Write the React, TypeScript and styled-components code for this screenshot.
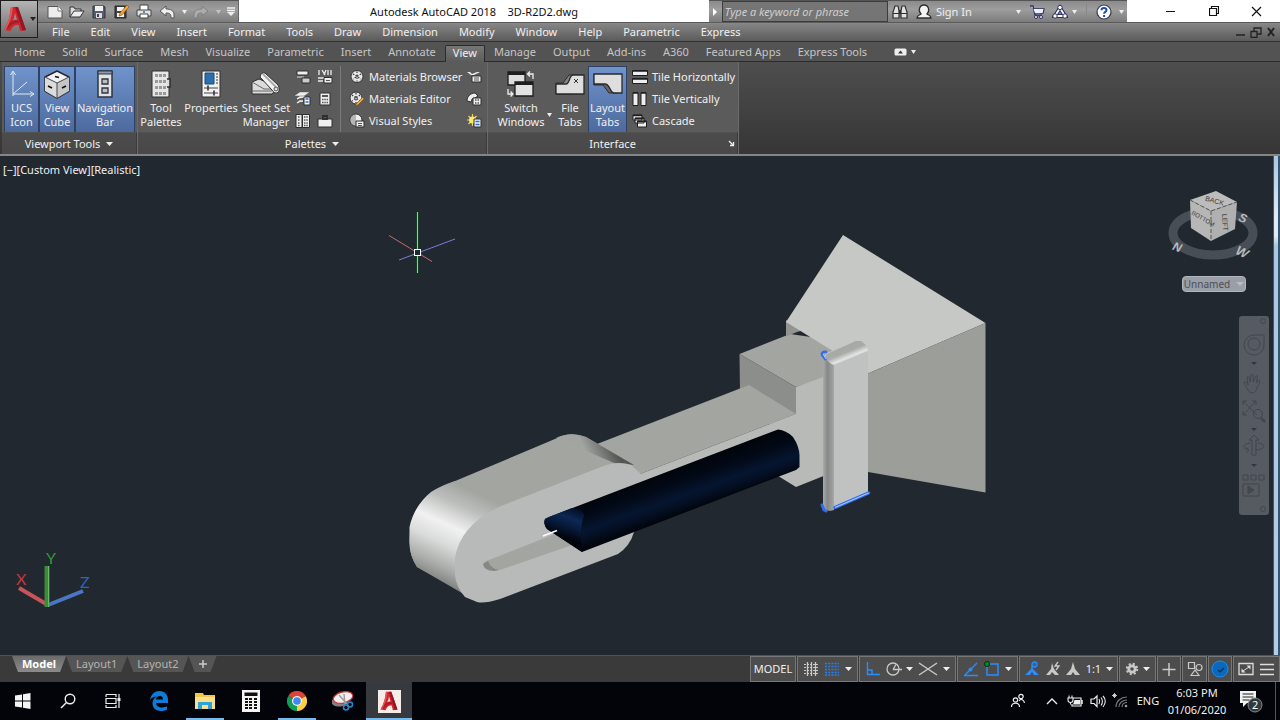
import React from "react";
import styled, { createGlobalStyle, css } from "styled-components";

const Global = createGlobalStyle`
  * { box-sizing: border-box; }
  body { margin: 0; background: #000; }
  button, input { font: inherit; color: inherit; }
  h1, h2, p { margin: 0; font: inherit; }
`;

const Shell = styled.div`
  min-height: 100vh;
  display: flex;
  flex-direction: column;
  font-family: "Noto Sans", "Open Sans", sans-serif;
  font-size: 11px;
  line-height: 14px;
  color: #f0f0f0;
  white-space: nowrap;
`;

const PlainButton = styled.button`
  display: flex;
  align-items: center;
  justify-content: center;
  padding: 0;
  border: 0;
  background: none;
  cursor: default;
`;

/* ---------- header ---------- */

const Header = styled.header`
  display: flex;
  background: linear-gradient(#8c8c8c 0, #8c8c8c 23px, #858585 24px, #5a5a5a 41px);
  border-bottom: 1px solid #303030;
`;

const AppButton = styled(PlainButton)`
  flex: none;
  width: 38px;
  height: 38px;
  gap: 2px;
  border: 1px solid #1d1d1d;
  background: linear-gradient(#b4b4b4, #6c6c6c);
`;

const HeaderRows = styled.div`
  flex: 1;
  min-width: 0;
`;

const TitleRow = styled.div`
  display: flex;
  height: 23px;
  background: #fff;
  border-bottom: 1px solid #5a5a5a;
`;

const barGradient = css`
  background: linear-gradient(#8b8b8b, #9d9d9d 40%, #7c7c7c);
`;

const QuickAccess = styled.div`
  flex: none;
  display: flex;
  width: 201px;
  padding-left: 6px;
  border-top: 1px solid #555;
  border-right: 1px solid #666;
  ${barGradient}
`;

const QuickButton = styled(PlainButton)<{ $w?: number }>`
  width: ${(p) => p.$w ?? 22}px;
`;

const Title = styled.h1`
  flex: 1;
  text-align: center;
  line-height: 23px;
  color: #111;
  white-space: pre;
`;

const InfoCenter = styled.div`
  flex: none;
  display: flex;
  align-items: center;
  width: 418px;
  border-top: 1px solid #555;
  ${barGradient}
`;

const SearchBox = styled.input`
  width: 168px;
  height: 21px;
  padding: 0 2px;
  border: 1px solid #3c3c3c;
  border-radius: 0;
  background: #757575;
  font-style: italic;
  outline: none;
  &::placeholder { color: #cfcfcf; opacity: 1; }
`;

const SignIn = styled(PlainButton)`
  width: 106px;
  margin-left: 4px;
  gap: 4px;
  justify-content: flex-start;
  & > :last-child { margin-left: auto; }
`;

const InfoDivider = styled.span`
  width: 1px;
  height: 16px;
  margin: 0 6px;
  background: #888;
`;

const WindowControls = styled.div`
  flex: none;
  display: flex;
  width: 153px;
  padding-left: 22px;
  color: #111;
`;

const WindowButton = styled(PlainButton)`
  width: 43px;
`;

const MenuRow = styled.div`
  display: flex;
  align-items: center;
  height: 18px;
`;

const Menu = styled.nav`
  flex: 1;
  display: flex;
  gap: 1px;
  padding-left: 4px;
`;

const MenuItem = styled(PlainButton)`
  padding: 0 10px;
`;

const DocControls = styled.div`
  display: flex;
  gap: 4px;
  padding-right: 4px;
  color: #222;
`;

/* ---------- ribbon ---------- */

const TabRow = styled.div`
  display: flex;
  height: 20px;
  gap: 1px;
  padding-left: 6px;
  background: #535353;
  border-bottom: 1px solid #2b2b2b;
`;

const RibbonTab = styled(PlainButton)<{ $active?: boolean }>`
  padding: 0 8px;
  color: #c6c6c6;
  ${(p) =>
    p.$active &&
    css`
      margin: 3px 0 -1px;
      padding: 0 7px 2px;
      border: 1px solid #2b2b2b;
      border-bottom: 0;
      border-radius: 2px 2px 0 0;
      background: linear-gradient(#777, #5b5b5b);
      color: #f0f0f0;
    `}
`;

const RibbonToggle = styled(PlainButton)`
  gap: 4px;
  margin-left: 18px;
`;

const Ribbon = styled.div`
  display: flex;
  height: 94px;
  padding-left: 2px;
  background: linear-gradient(#4e4e4e, #363636);
  border-bottom: 2px solid #858585;
`;

const Panel = styled.section<{ $w: number }>`
  flex: none;
  display: flex;
  flex-direction: column;
  width: ${(p) => p.$w}px;
  border-right: 1px solid #6b6b6b;
  background: #5b5b5b;
`;

const PanelBody = styled.div`
  display: flex;
  height: 70px;
  padding: 4px 2px 0;
`;

const PanelTitle = styled.div`
  flex: 1;
  display: grid;
  grid-template-columns: 12px 1fr 12px;
  align-items: center;
  border-top: 1px solid #525252;
  border-right: 1px solid #3a3a3a;
  background: linear-gradient(#4c4c4c, #484848);
`;

const PanelName = styled.h2`
  display: flex;
  align-items: center;
  justify-content: center;
  gap: 6px;
`;

const BigButton = styled(PlainButton)<{ $w: number; $on?: boolean }>`
  flex: none;
  flex-direction: column;
  justify-content: flex-start;
  width: ${(p) => p.$w}px;
  height: 67px;
  padding-top: 2px;
  ${(p) =>
    p.$on &&
    css`
      border: 1px solid #2f4266;
      padding-top: 1px;
      background: linear-gradient(#6f93cb, #4d6a9d);
    `}
`;

const BigIcon = styled.span`
  display: flex;
  align-items: center;
  height: 32px;
`;

const BigLabel = styled.span`
  display: flex;
  flex-direction: column;
  align-items: center;
  margin-top: 1px;
`;

const CaretSpot = styled.span`
  display: flex;
  align-self: flex-end;
  margin-top: -16px;
`;

const IconColumn = styled.div<{ $w: number }>`
  flex: none;
  width: ${(p) => p.$w}px;
  display: grid;
  grid-template-rows: repeat(3, 22px);
  justify-items: center;
`;

const ListColumn = styled.div<{ $w: number }>`
  flex: none;
  width: ${(p) => p.$w}px;
  display: grid;
  grid-template-rows: repeat(3, 22px);
`;

const ListButton = styled(PlainButton)`
  justify-content: flex-start;
  gap: 4px;
`;

const PanelRule = styled.span`
  flex: none;
  width: 1px;
  height: 66px;
  margin: 0 8px 0 4px;
  background: #7a7a7a;
`;

const WindowLayouts = styled.div`
  padding-left: 5px;
`;

/* ---------- drawing area ---------- */

const Workspace = styled.main`
  flex: 1;
  display: flex;
  min-height: 480px;
  background: #212830;
`;

const Canvas = styled.div`
  position: relative;
  flex: 1;
  overflow: hidden;
`;

const ModelDrawing = styled.svg`
  position: absolute;
  inset: 0;
  width: 100%;
  height: 100%;
`;

const ViewLabel = styled.p`
  position: absolute;
  top: 7px;
  left: 3px;
`;

const UcsIcon = styled.svg`
  position: absolute;
  left: 12px;
  bottom: 42px;
`;

const ViewCube = styled.div`
  position: absolute;
  top: 30px;
  right: 13px;
  display: flex;
  flex-direction: column;
  align-items: center;
  gap: 12px;
`;

const UcsMenu = styled(PlainButton)`
  width: 64px;
  height: 16px;
  gap: 6px;
  border: 1px solid #b3b6bd;
  border-radius: 4px;
  background: #9a9ea6;
  color: #4b4f57;
  font-size: 10px;
`;

const NavBar = styled.div`
  position: absolute;
  top: 160px;
  right: 4px;
  width: 30px;
  height: 199px;
  border-radius: 3px;
  background: #565b61;
`;

const ScrollEdge = styled.div`
  width: 7px;
  border-left: 1px solid #4b5563;
  border-right: 2px solid #35546e;
  background: linear-gradient(#a9c6e4 0, #dfeaf5 60px, #dfeaf5 80px, #a9c6e4 90px, #b5cde8);
`;

/* ---------- status bar ---------- */

const StatusBar = styled.footer`
  display: flex;
  align-items: flex-start;
  justify-content: space-between;
  height: 27px;
  border-top: 1px solid #50545a;
  background: #3a3a3a;
`;

const LayoutTabs = styled.div`
  display: flex;
  padding-left: 12px;
`;

const LayoutTab = styled(PlainButton)<{ $active?: boolean }>`
  height: 16px;
  padding: 0 10px;
  clip-path: polygon(0 0, 100% 0, calc(100% - 6px) 100%, 6px 100%);
  background: ${(p) => (p.$active ? "linear-gradient(#6a6a6a, #8b8b8b)" : "#555")};
  color: ${(p) => (p.$active ? "#fff" : "#b4b4b4")};
  font-weight: ${(p) => (p.$active ? 700 : 400)};
`;

const StatusTools = styled.div`
  display: flex;
  height: 26px;
  gap: 1px;
`;

const StatusGroup = styled.div<{ $w: number }>`
  display: flex;
  align-items: center;
  justify-content: space-evenly;
  width: ${(p) => p.$w}px;
  border: 1px solid #777;
  background: #4d4d4d;
`;

/* ---------- taskbar ---------- */

const TaskBar = styled.div`
  display: flex;
  justify-content: space-between;
  height: 38px;
  background: #020409;
`;

const TaskApps = styled.div`
  display: flex;
`;

const TaskButton = styled(PlainButton)<{ $running?: boolean; $focused?: boolean }>`
  width: 46px;
  background: ${(p) => (p.$focused ? "#36393d" : "none")};
  box-shadow: ${(p) =>
    p.$focused
      ? "inset 0 -2px #76b9ed"
      : p.$running
        ? "inset 4px 0 #020409, inset -4px 0 #020409, inset 0 -2px #76b9ed"
        : "none"};
`;

const SystemButton = styled(TaskButton)`
  width: 45px;
`;

const Tray = styled.div`
  display: flex;
  align-items: center;
`;

const TrayButton = styled(PlainButton)<{ $w: number }>`
  width: ${(p) => p.$w}px;
  height: 38px;
`;

const Clock = styled.div`
  width: 64px;
  text-align: center;
  line-height: 17px;
`;

const ShowDesktop = styled.span`
  width: 5px;
  height: 38px;
  border-left: 1px solid #555;
`;

const TaskTile = styled.span`
  display: flex;
  align-items: center;
  justify-content: center;
  width: 23px;
  height: 23px;
  background: #f6ece8;
`;

/* ---------- icons ---------- */

type IconProps = { w?: number; h?: number; children: React.ReactNode };
const Icon = ({ w = 16, h = 16, children }: IconProps) => (
  <svg width={w} height={h} viewBox={`0 0 ${w} ${h}`} fill="none" aria-hidden="true">
    {children}
  </svg>
);

const Caret = ({ color = "#eee", size = 7 }: { color?: string; size?: number }) => (
  <svg width={size} height={4} viewBox="0 0 8 4" preserveAspectRatio="none" aria-hidden="true">
    <path d="M0 0h8L4 4z" fill={color} />
  </svg>
);

const AutocadMark = ({ size = 24 }: { size?: number }) => (
  <svg width={size} height={size} viewBox="0 0 24 26" aria-hidden="true">
    <path fillRule="evenodd" d="M1 24Q7 14 8 1H15L23 24L17 25L15.500 19Q10 18 7.500 25ZM9.500 15Q12 13 14 14L12 7Q11.500 12 9.500 15Z" fill="#cf2630" />
    <path d="M12 1H15L23 24L19.500 24.600Z" fill="#951620" />
    <path d="M3.500 20Q9 13 15 14L16 17Q9 16 5 23Z" fill="#a81c26" />
    <path d="M8 1H10Q9 14 2.500 24.300L1 24Q7 14 8 1Z" fill="#e5555b" />
  </svg>
);

const dk = "#2e2e2e";
const lt = "#ececec";

const icons = {
  new: (
    <Icon><path d="M1 2.500h10l4 4v7.500H1z" fill={lt} stroke="#555" /><path d="M11 2v5h4" stroke="#777" fill="#fff" /></Icon>
  ),
  open: (
    <Icon><path d="M1 13V3h4l1 2h6v2" fill="#ddd" stroke="#333" /><path d="M1 13l4-6h10l-4 6z" fill="#eee" stroke="#333" /></Icon>
  ),
  save: (
    <Icon><path d="M2 2h11l1 1v11H2z" fill="#555d70" stroke="#333" /><path d="M4 2h8v5H4z" fill="#f2f2f2" /><path d="M5 9h6v5H5z" fill="#dcdcdc" /><path d="M6 10h2v3H6z" fill="#445" /></Icon>
  ),
  saveAs: (
    <Icon><path d="M2 2h11v12H2z" fill="#444" stroke="#222" /><path d="M4 3h7v4H4zM4 9h7v4H4z" fill="#f2f2f2" /><path d="M14 1l2 2-7 8-3 1 1-3z" fill="#efa83b" stroke="#7a4a10" strokeWidth=".6" /></Icon>
  ),
  print: (
    <Icon><path d="M4 6V1h8v5" fill="#fff" stroke="#444" /><path d="M1 6h14v6H1z" fill="#e4e4e4" stroke="#444" /><path d="M4 10h8v4H4z" fill="#fff" stroke="#444" /><circle cx="8" cy="8" r="1" fill="#36c" /></Icon>
  ),
  undo: (
    <Icon><path d="M1 7l6-5v3c5 0 8 2 8 5v4h-3c0-4-1-5-5-5v3z" fill="#eee" stroke="#555" /></Icon>
  ),
  redo: (
    <Icon><path d="M15 7l-6-5v3c-5 0-8 2-8 5v4h3c0-4 1-5 5-5v3z" fill="#acacac" stroke="#808080" /></Icon>
  ),
  customize: (
    <Icon w={10} h={10}><path d="M1 1h8M1 3.500h8" stroke="#eee" strokeWidth="1.500" /><path d="M1 5h8L5 9z" fill="#eee" /></Icon>
  ),
  binoculars: (
    <Icon w={18}><path d="M2 14V8l2-6h3l1 5v7zM16 14V8l-2-6h-3l-1 5v7z" fill="#e2e2e2" stroke={dk} strokeWidth="1.200" /><path d="M8 6h2v4H8z" fill={dk} /><path d="M2 9.500h6M10 9.500h6" stroke={dk} /></Icon>
  ),
  user: (
    <Icon><path d="M1 14c0-3 3-3 4-4-3-3-2-9 3-9s6 6 3 9c1 1 4 1 4 4z" fill="#f4f4f4" stroke={dk} strokeWidth="1.300" /></Icon>
  ),
  cart: (
    <Icon><path d="M1 2h3l2 9h7M4 5h11l-1 4H6" fill="#fff" stroke="#2c2f63" strokeWidth="1.300" /><path d="M4.500 5h10l-1 4H6z" fill="#eef" /><circle cx="7" cy="13" r="1.500" fill="#fff" stroke="#2c2f63" /><circle cx="12" cy="13" r="1.500" fill="#fff" stroke="#2c2f63" /></Icon>
  ),
  a360: (
    <Icon><path d="M8 4L3 12h10z" stroke="#2c2f63" strokeWidth="4" /><path d="M8 4L3 12h10z" stroke="#fff" strokeWidth="1.800" /><circle cx="8" cy="3.500" r="2.200" fill="#fff" stroke="#2c2f63" /><circle cx="3" cy="12" r="2.200" fill="#fff" stroke="#2c2f63" /><circle cx="13" cy="12" r="2.200" fill="#fff" stroke="#2c2f63" /></Icon>
  ),
  help: (
    <Icon><circle cx="8" cy="8" r="7" fill="#fff" stroke="#333c55" strokeWidth="1.200" /><path d="M5.500 6.300c0-3 5-3 5 0 0 1.700-2.400 1.600-2.400 3.500M8.100 11v2" stroke="#1c50b0" strokeWidth="2" /></Icon>
  ),
  minimize: <Icon w={10} h={10}><path d="M0 5.500h9" stroke="currentColor" /></Icon>,
  restore: <Icon w={10} h={10}><path d="M.5 2.500h7v7h-7zM2.500 2V.5h7v7H8" stroke="currentColor" strokeWidth="1.200" /></Icon>,
  close: <Icon w={11} h={11}><path d="M1 1l9 9M10 1l-9 9" stroke="currentColor" strokeWidth="1.200" /></Icon>,
  docMin: <Icon w={10} h={10}><path d="M0 8h9" stroke="currentColor" strokeWidth="1.500" /></Icon>,
  docRestore: <Icon w={12} h={11}><path d="M1 4.500h6v6H1zM4 4V1h7v6H7" stroke="currentColor" strokeWidth="1.300" /></Icon>,
  docClose: <Icon w={10} h={10}><path d="M2 1l6 8M8 1L2 9" stroke="currentColor" strokeWidth="2" /></Icon>,
  ucs: (
    <Icon w={26} h={28}><path d="M4 26V2M1.500 5L4 1l2.500 4M4 24h21M21 21.500l4 2.500-4 2.500M4 24L18 12" stroke="#dfe8f6" /></Icon>
  ),
  cube: (
    <Icon w={28} h={29}>
      <path d="M14 1l12 6v14l-12 7L2 21V7z" fill="#f2f2f2" stroke="#26292e" strokeWidth="1.500" strokeLinejoin="round" />
      <path d="M2 7l12 6v15L2 21z" fill="#dcdcdc" /><path d="M26 7l-12 6v15l12-7z" fill="#c6c6c6" />
      <path d="M2 7l12 6 12-6M14 13v15" stroke="#44474c" />
      <path d="M12 6.500l4 1M5 16l4 2M19 18l4-2" stroke="#111" strokeWidth="1.800" />
    </Icon>
  ),
  navBar: (
    <Icon w={16} h={28}><path d="M1 1h14v26H1z" fill="#e2e2e2" stroke="#2e3440" strokeWidth="1.500" /><path d="M1 1h14v3H1z" fill="#8d98a8" stroke="#2e3440" /><path d="M5 9h6v5H5zM5 18h6v5H5z" fill="#b9bdc4" stroke="#2e3440" strokeWidth="1.300" /></Icon>
  ),
  toolPalettes: (
    <Icon w={20} h={28}><path d="M1 1h17v26H1z" fill="#e6e6e6" stroke={dk} /><path d="M16 9h3v8h-3" fill="#ddd" stroke={dk} strokeWidth="1.500" />
      {[4, 10, 16, 22].map((y) => [4, 8, 12].map((x) => <rect key={`${x}-${y}`} x={x} y={y} width="3" height="3" fill="#999" />))}
    </Icon>
  ),
  properties: (
    <Icon w={20} h={28}><path d="M1 1h18v26H1z" fill="#f1f1f1" stroke={dk} /><path d="M4 3h9v11H4z" fill="#2c6fae" stroke="#1d4875" /><path d="M15 4h2M15 7h2M15 10h2M15 13h2" stroke="#333" /><path d="M3 18h14M3 23h14" stroke="#444" /><path d="M7 15.500v5M13 20.500v5" stroke="#444" strokeWidth="1.800" /></Icon>
  ),
  sheetSet: (
    <Icon w={30} h={26}><path d="M1 11L8 8l19 8-6 7H1z" fill="#dcdcdc" stroke={dk} /><path d="M1 11L13 18H21M1 20H21" stroke="#666" /><path d="M9 6Q10 1 14 2L27 14Q30 20 26 22Q23 23 21 19Z" fill="#f4f4f4" stroke={dk} /><path d="M12 3L25 16" stroke="#aaa" strokeWidth="2" /><circle cx="25" cy="18" r="2" fill="#ddd" stroke="#555" /></Icon>
  ),
  palA: <Icon><path d="M2 2h11v4H2z" fill="#eee" stroke={dk} /><path d="M2 8h7" stroke="#ddd" /><path d="M7 9h8v5H7z" fill="#ccc" stroke={dk} /></Icon>,
  palB: <Icon><path d="M2 1v5M5 1l3 5M9 1l-2 5M11 1v5M14 1v5" stroke="#eee" strokeWidth="1.300" /><path d="M1 9h6M1 12h5" stroke="#eee" strokeWidth="1.500" /><path d="M7 8.500h8v5.500H7z" fill="#eee" stroke={dk} /><path d="M9 11.500h4" stroke="#555" /></Icon>,
  palC: <Icon><path d="M2 4l3-2h7l-3 2zM2 8l3-2h5M2 12l3-2h3" stroke="#eee" fill="#eee" strokeWidth="1.300" /><path d="M9 6h6v8H9z" fill="#f4f4f4" stroke={dk} /><path d="M10.500 8h3M10.500 11h3" stroke="#2b6fd0" strokeWidth="1.500" /></Icon>,
  calc: <Icon><path d="M3 2h10v12H3z" fill="#eee" stroke={dk} /><path d="M5 4h6v2H5z" fill="#555" /><path d="M5 8.500h6M5 11.500h6" stroke="#555" strokeWidth="1.500" strokeDasharray="1.500 .8" /></Icon>,
  palD: <Icon><path d="M1 1.500h6v13H1zM7.500 1.500h7v13h-7z" fill="#eee" stroke={dk} /><path d="M3 4h2M3 7h2M3 10h2M3 12.500h2M9 4h4M9 7h4M9 10h4M9 12.500h4" stroke="#555" strokeWidth="1.300" strokeDasharray="1.500 .8" /></Icon>,
  toolbox: <Icon><path d="M1 6h14v8H1z" fill="#f0f0f0" stroke={dk} /><path d="M6 6V3h4v3" stroke={dk} strokeWidth="1.800" /><path d="M5 6h6" stroke="#333" strokeWidth="2" /></Icon>,
  matBrowser: <Icon><circle cx="8" cy="7.500" r="6" fill="#e8e8e8" stroke="#333" /><path d="M4 5l8 5M12 5l-8 5M8 2.500v10" stroke="#333" strokeWidth="1.200" strokeDasharray="1.500 1.500" /></Icon>,
  matEditor: <Icon><circle cx="7" cy="7" r="6" fill="#e8e8e8" stroke="#333" /><path d="M3 4l8 6M11 4l-8 6M7 2v10" stroke="#333" strokeWidth="1.200" strokeDasharray="1.500 1.500" /><path d="M14 6l1 2-6 6-3 1 2-3z" fill="#f0a93a" stroke="#6e4a17" strokeWidth=".6" /></Icon>,
  visStyles: <Icon><circle cx="7" cy="7" r="6" fill="#eee" stroke="#333" /><path d="M7 1.500A5.500 5.500 0 007 12.500z" fill="#b5b5b5" /><path d="M7 8h8v6H7z" fill="#eee" stroke={dk} /><path d="M9 10.500h4M9 12.500h4" stroke="#555" /></Icon>,
  extA: <Icon><path d="M1 3h3l2 2 5-2h3L8 6H5z" fill="#eee" /><path d="M6 7h9v6H6z" fill="#eee" stroke={dk} /><path d="M8 9h5M8 11h5" stroke="#555" /></Icon>,
  extB: <Icon><path d="M1 10c0-5 4-8 8-8l3 3-3 2c-3 0-3 1-4 4z" fill="#eee" stroke={dk} /><path d="M7 7h8v7H7z" fill="#eee" stroke={dk} /><path d="M9 9h4M9 12h4" stroke="#555" strokeDasharray="1.500 1" strokeWidth="1.500" /></Icon>,
  extC: <Icon><path d="M6.500 1v12M1 7h12M2.500 3l8 8M10.500 3l-8 8" stroke="#e8d45b" strokeWidth="1.200" /><circle cx="6.500" cy="7" r="3.500" fill="#fbe96b" /><path d="M8 6h7v8H8z" fill="#eef3fa" stroke={dk} /><path d="M9.500 8.500h4M9.500 11.500h4" stroke="#2b6fd0" strokeWidth="1.300" /></Icon>,
  switchWin: (
    <Icon w={30} h={28}><path d="M2 2h17v13H2z" fill="#ddd" stroke="#1e1e1e" strokeWidth="1.300" /><path d="M2 2h17v3H2z" fill="#1e1e1e" /><path d="M9 12h18v14H9z" fill="#e2e2e2" stroke="#1e1e1e" strokeWidth="1.300" /><path d="M9 12h18v3H9z" fill="#1e1e1e" /><path d="M22 4h5v5M24 1.500L21.500 4 24 6.500M2 19v5h5M4.500 21.500L7 24l-2.500 2.500" stroke="#eee" strokeWidth="1.300" /></Icon>
  ),
  fileTabs: (
    <Icon w={30} h={24}><path d="M1 22V11h7l6-8h10v5l-6 14z" fill="#858585" stroke="#2a2a2a" /><path d="M1 22V12h10c4 0 3-9 7-9h11v19z" fill="#dedede" stroke="#2a2a2a" strokeWidth="1.300" /><path d="M19 7l4 4M23 7l-4 4" stroke="#333" /></Icon>
  ),
  layoutTabs: (
    <Icon w={30} h={24}><path d="M1 2v11h9l6 8h8l2-10z" fill="#666" stroke="#2a2a2a" /><path d="M1 2v10h11c5 0 5 9 9 9h8V2z" fill="#dedede" stroke="#2a2a2a" strokeWidth="1.300" /></Icon>
  ),
  tileH: <Icon><path d="M.5 1.500h15v5H.5zM.5 9.500h15v5H.5z" fill="#eee" stroke="#1e1e1e" /><path d="M.5 2h15M.5 10h15" stroke="#1e1e1e" strokeWidth="1.500" /></Icon>,
  tileV: <Icon><path d="M1 1.500h5v13H1zM9 1.500h5v13H9z" fill="#eee" stroke="#1e1e1e" /><path d="M1 2h5M9 2h5" stroke="#1e1e1e" strokeWidth="1.500" /></Icon>,
  cascade: <Icon><path d="M1 2h9v5H1zM3 5h9v5H3zM5.500 8h9v6h-9z" fill="#eee" stroke="#1e1e1e" /><path d="M1 2.500h9M3 5.500h9M5.500 8.500h9" stroke="#1e1e1e" strokeWidth="1.500" /></Icon>,
  launcher: <Icon w={7} h={7}><path d="M1 1l4 4M5.500 2v3.500H2" stroke="#eee" strokeWidth="1.300" /></Icon>,
  ribbonToggle: <Icon w={13} h={8}><rect x=".5" y=".5" width="12" height="7" rx="1.500" fill="#eee" /><path d="M4 5.500h5L6.500 2.500z" fill="#333" /></Icon>,
};

type IconName = keyof typeof icons;

/* ---------- status and taskbar icons ---------- */

const g = "#c9c9c9";
const b = "#2a8cff";

const status = {
  grid: (
    <Icon><path d="M4.500 1v14M8.500 1v14M12.500 1v14" stroke={g} strokeWidth="1.300" /><path d="M1 3.500h14M1 6.500h14M1 9.500h14M1 12.500h14" stroke={g} strokeDasharray="2 1" /></Icon>
  ),
  snap: (
    <Icon><path d="M1 2.500h14M1 5.500h14M1 8.500h14M1 11.500h14M1 14h14" stroke="#2f7de0" strokeWidth="1.700" strokeDasharray="2 1.200" /></Icon>
  ),
  ortho: <Icon><path d="M2.500 1v12.500H15M3 9h4v4" stroke={b} strokeWidth="1.400" /></Icon>,
  polar: <Icon><circle cx="7" cy="8" r="6" stroke={g} strokeWidth="1.300" /><path d="M7 8.500h9M7 8.500l3-5" stroke={g} strokeWidth="1.300" /></Icon>,
  iso: <Icon w={20}><path d="M1 2l18 12M19 2L1 14" stroke={g} strokeWidth="1.500" /></Icon>,
  track: <Icon><path d="M1 14.500h14M2 14L14 2" stroke={b} strokeWidth="1.400" /><circle cx="7.500" cy="8.500" r="2" fill={b} /></Icon>,
  osnap: <Icon><path d="M3 3h11v11H3z" stroke={b} strokeWidth="1.500" /><circle cx="3" cy="3" r="2.500" fill="#0b8a1c" stroke="#062f0b" /></Icon>,
  annoA: <Icon><path d="M8 2l-1 6-6 6h5l2-3 2 3h5l-6-6z" fill={b} /><circle cx="10.500" cy="3.500" r="2.500" stroke={b} strokeWidth="1.300" fill="#3b5f8a" /></Icon>,
  annoB: <Icon><path d="M7 2L6 8l-5 6h4l2-3 3 3h4L9 8z" fill={g} /><path d="M13 1l-3 4h4l-3 4" stroke={g} strokeWidth="1.300" /></Icon>,
  annoC: <Icon><path d="M8 1L6 8l-5 6h5l2-3 2 3h5l-5-6z" fill={g} /></Icon>,
  gear: (
    <Icon w={14}><circle cx="7" cy="8" r="3.200" stroke={g} strokeWidth="2.800" /><circle cx="7" cy="8" r="5.200" stroke={g} strokeWidth="2" strokeDasharray="2.050 2.050" /></Icon>
  ),
  plus: <Icon><path d="M8 2v13M1.500 8.500h13" stroke={g} strokeWidth="1.500" /></Icon>,
  isolate: <Icon><path d="M1.500 1.500h6v6h-6zM4 14.500h8L8 9z" stroke={g} strokeWidth="1.200" /><circle cx="12" cy="6.500" r="3" stroke={g} strokeWidth="1.200" /></Icon>,
  hardware: <Icon w={18} h={18}><circle cx="9" cy="9" r="8" fill="#0c68bb" stroke="#1a8cf0" /><path d="M7 10l2 2 4-4" stroke="#072f5c" strokeWidth="1.200" /></Icon>,
  full: <Icon><path d="M1 2.500h14v11H1z" stroke="#ddd" strokeWidth="1.300" /><path d="M3.500 11.500v-4l4 4zM12.500 4.500v4l-4-4z" fill="#ddd" /><path d="M5 10l6-4" stroke="#ddd" /></Icon>,
  menu: <Icon><path d="M1 3.500h14M1 8.500h14M1 13.500h14" stroke="#ddd" strokeWidth="1.500" /></Icon>,
};

const task = {
  start: <Icon><path d="M0 2.500l7-1v6H0zM8 1.300L15.500 0v7.500H8zM0 8.500h7v6l-7-1zM8 8.500h7.500V16L8 14.700z" fill="#f4f4f4" /></Icon>,
  search: <Icon><circle cx="10" cy="6" r="4.800" stroke="#eee" strokeWidth="1.400" /><path d="M6.500 9.500L1 15" stroke="#eee" strokeWidth="1.500" /></Icon>,
  view: <Icon><path d="M1 4V1.500M1 1.500h10M11 1v3M1 5.500h10v5H1zM1 12v3M1 14.500h10M11 12v3M14 1v14" stroke="#eee" strokeWidth="1.200" /><path d="M14 5v3" stroke="#eee" strokeWidth="3" /></Icon>,
  edge: (
    <Icon w={20} h={20}><path d="M1 9C2 3 6 0 10.500 0 16 0 19 4 19 9v3H7c0 3 3 4.500 6 4.500 2 0 4-.5 5-1.200v3.500c-2 1-4 1.200-6 1.200-5 0-8.500-3-8.500-7.500C3.500 9 6 6.500 8 5.500 5 5.500 2 7 1 9zm6-.5h7C14 6.500 13 5 11 5S7.500 6.500 7 8.500z" fill="#0f7ad8" /></Icon>
  ),
  explorer: (
    <Icon w={20} h={18}><path d="M0 1h8l1 2h11v14H0z" fill="#f0c74b" /><path d="M0 5h20v12H0z" fill="#fbe08a" /><path d="M3 17v-7h14v7h-4v-4H7v4z" fill="#2fa3d8" /></Icon>
  ),
  calculator: (
    <Icon w={18} h={22}><path d="M0 0h18v22H0z" fill="#f5f5f5" /><path d="M2.500 2.500h13v3.500h-13z" fill="#111" />
      {[8, 11, 14, 17].map((y) => [3, 7, 12].map((x) => <rect key={`${x}-${y}`} x={x} y={y} width="3" height="2" fill="#111" />))}
    </Icon>
  ),
  chrome: (
    <Icon w={20} h={20}><path d="M10 10L1.300 5A10 10 0 0118.700 5z" fill="#db4437" /><path d="M10 10L1.300 5A10 10 0 0010 20z" fill="#0f9d58" /><path d="M10 10V20A10 10 0 0018.700 5z" fill="#ffcd40" /><path d="M10 5.500h8.900L18.700 5H10z" fill="#db4437" /><circle cx="10" cy="10" r="5" fill="#f4f4f4" /><circle cx="10" cy="10" r="3.800" fill="#4285f4" /></Icon>
  ),
  snip: (
    <Icon w={22} h={20}><path d="M0 9v3c0 4 10 5 14 1l5-7z" fill="#8c7c80" /><ellipse cx="11" cy="6.500" rx="10" ry="5.500" transform="rotate(-14 11 6.500)" fill="#f3eeee" stroke="#c8333d" strokeWidth="1.200" /><path d="M7 4l8 9M12 3l1 11" stroke="#999" strokeWidth="1.400" /><circle cx="14" cy="16.500" r="2.500" stroke="#2389cf" strokeWidth="1.600" /><circle cx="18" cy="13.500" r="2.500" stroke="#2389cf" strokeWidth="1.600" /></Icon>
  ),
  people: <Icon><circle cx="5.500" cy="7" r="2.200" stroke="#eee" strokeWidth="1.200" /><path d="M1.500 14c0-5 8-5 8 0" stroke="#eee" strokeWidth="1.200" /><circle cx="11" cy="3.500" r="2.200" stroke="#eee" strokeWidth="1.200" /><path d="M9 8c2-3 5-1 5.500 2" stroke="#eee" strokeWidth="1.200" /></Icon>,
  chevron: <Icon w={12} h={12}><path d="M1 9l5-5 5 5" stroke="#eee" strokeWidth="1.300" /></Icon>,
  battery: <Icon><path d="M6 5h8v8H5v-2" stroke="#eee" strokeWidth="1.200" /><path d="M7.500 7h5.500v4.500H6z" fill="#eee" /><path d="M15 7v4" stroke="#eee" strokeWidth="1.500" /><path d="M1 5h5v2a2.500 2.500 0 01-5 0zM2 2.500V5M5 2.500V5M3.500 9v2.500" stroke="#eee" strokeWidth="1.100" /></Icon>,
  speaker: <Icon><path d="M1 6h3l3-3v10.500l-3-3H1z" stroke="#eee" strokeWidth="1.200" /><path d="M9 6c1 1.500 1 3 0 5M11 4.500c2 2.500 2 5 0 8M13 3c3 3 3 7.500 0 11" stroke="#eee" strokeWidth="1.100" /></Icon>,
  wifi: <Icon><path d="M4 14C4 8 9 4 15 4M7 14c0-4 3.500-7 8-7M10 14c0-2.500 2-4.500 5-4.500" stroke="#777" strokeWidth="1.200" /><circle cx="14" cy="13" r="1.300" fill="#999" /><path d="M2.500 0v5M0 2.500h5M1 1l3 3M4 1L1 4" stroke="#eee" strokeWidth=".8" /></Icon>,
  notify: (
    <Icon w={26} h={26}><path d="M1 3h16v12H8l-4 4v-4H1z" fill="#f2f2f2" /><path d="M3.500 6h11M3.500 9h11M3.500 12h7" stroke="#222" /><circle cx="16" cy="17" r="7" fill="#34373b" stroke="#888" /><text x="13" y="21" fontSize="11" fill="#fff">2</text></Icon>
  ),
};

/* ---------- ribbon parts ---------- */

const Big = ({ icon, w, on, lines, caret }: { icon: IconName; w: number; on?: boolean; lines: string[]; caret?: boolean }) => (
  <BigButton $w={w} $on={on} aria-pressed={on}>
    <BigIcon>{icons[icon]}</BigIcon>
    <BigLabel>{lines.map((l) => <span key={l}>{l}</span>)}</BigLabel>
    {caret && <CaretSpot><Caret size={5} /></CaretSpot>}
  </BigButton>
);

const SmallIcons = ({ w, names }: { w: number; names: [IconName, string][] }) => (
  <IconColumn $w={w}>
    {names.map(([n, label]) => <PlainButton key={n} aria-label={label}>{icons[n]}</PlainButton>)}
  </IconColumn>
);

const List = ({ w, items }: { w: number; items: [IconName, string][] }) => (
  <ListColumn $w={w}>
    {items.map(([n, label]) => <ListButton key={n}>{icons[n]}{label}</ListButton>)}
  </ListColumn>
);

const menus = ["File", "Edit", "View", "Insert", "Format", "Tools", "Draw", "Dimension", "Modify", "Window", "Help", "Parametric", "Express"];
const tabs = ["Home", "Solid", "Surface", "Mesh", "Visualize", "Parametric", "Insert", "Annotate", "View", "Manage", "Output", "Add-ins", "A360", "Featured Apps", "Express Tools"];

/* ---------- solid model ---------- */

const Model = () => (
  <ModelDrawing viewBox="0 156 1273 499" role="img" aria-label="3D solid model">
    <defs>
      <linearGradient id="roundLeft" gradientUnits="userSpaceOnUse" x1="472" y1="490" x2="428" y2="585">
        <stop offset="0" stopColor="#a2a4a0" />
        <stop offset=".18" stopColor="#bcbebc" />
        <stop offset=".4" stopColor="#f1f1f1" />
        <stop offset=".58" stopColor="#d9dbda" />
        <stop offset=".8" stopColor="#a6a8a6" />
        <stop offset="1" stopColor="#6c6e6d" />
      </linearGradient>
      <linearGradient id="roundRight" gradientUnits="userSpaceOnUse" x1="588" y1="456" x2="612" y2="444">
        <stop offset="0" stopColor="#a2a4a0" />
        <stop offset="1" stopColor="#555756" />
      </linearGradient>
      <linearGradient id="rod" gradientUnits="userSpaceOnUse" x1="674" y1="468" x2="689" y2="510">
        <stop offset="0" stopColor="#01040a" />
        <stop offset=".35" stopColor="#020a18" />
        <stop offset=".65" stopColor="#061530" />
        <stop offset=".85" stopColor="#040e20" />
        <stop offset="1" stopColor="#02060e" />
      </linearGradient>
      <linearGradient id="rodEnd" gradientUnits="userSpaceOnUse" x1="572" y1="508" x2="560" y2="540">
        <stop offset="0" stopColor="#03102a" />
        <stop offset=".3" stopColor="#0c2853" />
        <stop offset=".55" stopColor="#071a3a" />
        <stop offset=".9" stopColor="#01030a" />
      </linearGradient>
      <linearGradient id="plateSide" x1="0" x2="1" y1="0" y2="0">
        <stop offset="0" stopColor="#a9abaa" />
        <stop offset=".4" stopColor="#868887" />
        <stop offset="1" stopColor="#a5a7a6" />
      </linearGradient>
      <linearGradient id="plateTop" gradientUnits="userSpaceOnUse" x1="842" y1="344" x2="849" y2="361">
        <stop offset="0" stopColor="#a5a7a3" />
        <stop offset=".5" stopColor="#a9aba8" />
        <stop offset=".8" stopColor="#e2e4e3" />
        <stop offset="1" stopColor="#c3c5c4" />
      </linearGradient>
    </defs>

    <path d="M739.500 354L790 334L832 340V376L796 387Z" fill="#a3a5a1" />
    <path d="M786 320L804 330L797 332L786 336.500Z" fill="#92948f" />
    <path d="M843 235L985.500 323L868 373.500L832 389V350.500L786 322Z" fill="#c6c8c6" />
    <path d="M985.500 323V492.500L868 472V373.500Z" fill="#9c9e99" />
    <path d="M739.500 354L796 387V415L740 392Z" fill="#8c8e8b" />
    <path d="M796 387L826 376V475L796 487L770 471V424L796 414Z" fill="#b8bab8" />

    <path d="M597 444L749 385L796 414L640 474Z" fill="#a3a5a1" />
    <path d="M620 465L640 474L796 414V450L620 520Z" fill="#b8bab8" />

    <path d="M448 484L562 436Q572 432 586 437L632 464L500 508L470 596L417 567Q409 555 409.500 540Q409 500 448 484Z" fill="#a3a5a1" />
    <path d="M556 438Q571 431 586 437L634 465L614 463Z" fill="url(#roundRight)" />
    <path d="M455 481L504 505L462 560L474 600L417 567Q409 555 409.500 540V527Q414 506 431 492Q440 486 455 481Z" fill="url(#roundLeft)" />
    <path d="M501 506L606 465Q620 461 631 465L641 474L634 532Q630 546 618 554L500 599Q484 604 477 602L465 597Q456 587 455 575V558Q460 525 501 506Z" fill="#b7bab8" />
    <path d="M489 560L555 534L575 544L500 570Q488 572 483 565Q483 562 489 560Z" fill="#a3a5a1" />
    <path d="M483 564Q484 571 494 571L499 570Q491 569 488 561Z" fill="#868886" />

    <path d="M549 517L778 429.500Q786 430 793 437Q799 446 799.500 455V467L796 470L582 552L547 529Q543 524 545 519Z" fill="url(#rod)" />
    <path d="M549 517L572 508Q584 509 584 516Q579 528 582 552L547 529Q543 524 545 519Z" fill="url(#rodEnd)" />
    <path d="M543 536L557 530.500" stroke="#fff" strokeWidth="1.500" />

    <path d="M823 359Q824 354 829 352L856 341H861L866 345L868 352V494L832 510Q825 512 823 506Z" fill="#c0c2c1" />
    <path d="M823 357L834 364V510Q825 512 823 506Z" fill="url(#plateSide)" />
    <path d="M827 354L856 341H861Q867 345 868 351L834 365Q828 363 825 357Z" fill="url(#plateTop)" />
    <path d="M827 352Q821 351 822 355L826 360" fill="none" stroke="#2f6cf0" strokeWidth="2.500" />
    <path d="M823 354L826 359" stroke="#a8c6ff" />
    <path d="M822 505L824 510L826 511" fill="none" stroke="#2f6cf0" strokeWidth="3" strokeLinecap="round" />
    <path d="M835 507.500L868.500 493" stroke="#2f6cf0" strokeWidth="3.500" strokeLinecap="round" />
    <path d="M835 507.500L868.500 493" stroke="#a8c6ff" strokeWidth="1.200" />

    <path d="M417.500 212V273" stroke="#0d5a1c" strokeWidth="2" />
    <path d="M417.500 212V273" stroke="#6fe07c" />
    <path d="M389 235.500L432 261.500" stroke="#c56a6c" />
    <path d="M399 260L455 239" stroke="#7a7de0" />
    <rect x="414.500" y="249.500" width="6" height="6" fill="#212830" stroke="#fff" />
  </ModelDrawing>
);

const Ucs = () => (
  <UcsIcon width="84" height="66" viewBox="0 -4 84 66" fontFamily="Lato" fontWeight="400" fontSize="16">
    <path d="M36 54L7 37" stroke="#c85358" strokeWidth="4" />
    <path d="M36 54L71 40" stroke="#4a76c4" strokeWidth="4" />
    <path d="M35 56V15" stroke="#3f8a3a" strokeWidth="5" />
    <path d="M36.500 56V15" stroke="#6bb765" />
    <text x="4" y="34" fill="#c0383c">X</text>
    <text x="34" y="13" fill="#2f9a35">Y</text>
    <text x="68" y="37" fill="#2765c0">Z</text>
  </UcsIcon>
);

const Cube = () => (
  <svg width="92" height="78" viewBox="0 0 92 78" fontFamily="Liberation Sans" fontWeight="700" role="img" aria-label="View cube">
    <ellipse cx="45" cy="47" rx="40" ry="22" fill="none" stroke="#474e56" strokeWidth="9" />
    <g fill="#b9bcbf" fontSize="12" fontStyle="italic">
      <text x="5" y="65" transform="rotate(20 9 61)">N</text>
      <text x="68" y="70" fontSize="13" transform="rotate(25 73 66)">W</text>
      <text x="71" y="36" transform="rotate(20 75 32)">S</text>
    </g>
    <path d="M22 14L48 5L69 16L43 25Z" fill="#bcbcbc" />
    <path d="M22 14L43 25V55L23 42Z" fill="#b6b6b6" />
    <path d="M69 16L43 25V55L67 43Z" fill="#b0b0b0" />
    <path d="M22 14L43 25L69 16M43 25V55" fill="none" stroke="#555" strokeDasharray="4 2" />
    <g fill="#3c3c3c" fontSize="7" fontWeight="400">
      <text x="37" y="17" transform="rotate(16 46 15)">BACK</text>
      <text x="23" y="28" fontSize="6" transform="rotate(30 23 28)">BOTTOM</text>
      <text x="54" y="28" transform="rotate(86 54 28)">LEFT</text>
    </g>
  </svg>
);

const NavTools = () => (
  <svg width="30" height="199" viewBox="0 0 30 199" fill="none" stroke="#42474d" role="img" aria-label="Navigation tools">
    <circle cx="24" cy="5" r="2.500" /><circle cx="24" cy="193" r="2.500" />
    <path d="M25 28V19H15a10 10 0 1 0 10 9z" /><circle cx="15" cy="28" r="6" />
    <path d="M9 74c-2-4-4-6-4-8 2-1 3 1 4 3l-1-8c1-2 2-1 3 5l1-7c1-2 3-1 2 7l3-6c2-1 2 1 0 7l3-3c2 0 0 4-2 8-1 5-6 7-9 2z" />
    <path d="M4 85l14 14M17 85L4 99M4 89v-4h4M13 85h4v4M4 95v4h4" /><circle cx="19" cy="98" r="4.500" /><path d="M22 102l4 4" strokeWidth="2.500" />
    <path d="M13 139v-15h-3l5-5 5 5h-3v15z" /><path d="M10 134c-7-1-7-6 1-7M19 127c9 1 7 7-3 7M7 137l3-3-3-3" />
    <path d="M4 159h5v5H4zM12 159h5v5h-5zM20 159h5v5h-5zM4 168h16v12H4z" /><path d="M9 170l6 4-6 4z" fill="#42474d" />
    <path d="M12 46h6l-3 3zM12 112h6l-3 3zM12 148h6l-3 3z" fill="#34383d" stroke="none" />
  </svg>
);

export default function App() {
  return (
    <Shell>
      <Global />
      <Header>
        <AppButton aria-label="Application menu"><AutocadMark size={26} /><Caret color="#222" size={6} /></AppButton>
        <HeaderRows>
          <TitleRow>
            <QuickAccess>
              <QuickButton aria-label="New">{icons.new}</QuickButton>
              <QuickButton aria-label="Open">{icons.open}</QuickButton>
              <QuickButton aria-label="Save">{icons.save}</QuickButton>
              <QuickButton aria-label="Save as">{icons.saveAs}</QuickButton>
              <QuickButton aria-label="Plot" $w={24}>{icons.print}</QuickButton>
              <QuickButton aria-label="Undo">{icons.undo}</QuickButton>
              <QuickButton aria-label="Undo list" $w={12}><Caret size={5} /></QuickButton>
              <QuickButton aria-label="Redo">{icons.redo}</QuickButton>
              <QuickButton aria-label="Redo list" $w={12}><Caret size={5} color="#c4c4c4" /></QuickButton>
              <QuickButton aria-label="Customize" $w={14}>{icons.customize}</QuickButton>
            </QuickAccess>
            <Title>{"Autodesk AutoCAD 2018    3D-R2D2.dwg"}</Title>
            <InfoCenter>
              <QuickButton aria-label="Toggle search" $w={13}>
                <Icon w={6} h={8}><path d="M1 0l4 4-4 4z" fill="#fff" /></Icon>
              </QuickButton>
              <SearchBox aria-label="Search" placeholder="Type a keyword or phrase" />
              <QuickButton aria-label="Find" $w={24}>{icons.binoculars}</QuickButton>
              <SignIn>{icons.user}Sign In<Caret size={5} /></SignIn>
              <QuickButton aria-label="App store" $w={32}>{icons.cart}</QuickButton>
              <QuickButton aria-label="Autodesk account" $w={16}>{icons.a360}</QuickButton>
              <QuickButton aria-label="Account list" $w={12}><Caret size={5} /></QuickButton>
              <InfoDivider />
              <QuickButton aria-label="Help">{icons.help}</QuickButton>
              <QuickButton aria-label="Help list" $w={12}><Caret size={5} /></QuickButton>
            </InfoCenter>
            <WindowControls>
              <WindowButton aria-label="Minimize">{icons.minimize}</WindowButton>
              <WindowButton aria-label="Restore">{icons.restore}</WindowButton>
              <WindowButton aria-label="Close">{icons.close}</WindowButton>
            </WindowControls>
          </TitleRow>
          <MenuRow>
            <Menu>{menus.map((m) => <MenuItem key={m}>{m}</MenuItem>)}</Menu>
            <DocControls>
              <PlainButton aria-label="Minimize drawing">{icons.docMin}</PlainButton>
              <PlainButton aria-label="Restore drawing">{icons.docRestore}</PlainButton>
              <PlainButton aria-label="Close drawing">{icons.docClose}</PlainButton>
            </DocControls>
          </MenuRow>
        </HeaderRows>
      </Header>

      <TabRow>
        {tabs.map((t) => <RibbonTab key={t} $active={t === "View"}>{t}</RibbonTab>)}
        <RibbonToggle aria-label="Minimize ribbon">{icons.ribbonToggle}<Caret size={5} /></RibbonToggle>
      </TabRow>

      <Ribbon>
        <Panel $w={136}>
          <PanelBody>
            <Big icon="ucs" w={35} on lines={["UCS", "Icon"]} />
            <Big icon="cube" w={36} on lines={["View", "Cube"]} />
            <Big icon="navBar" w={60} on lines={["Navigation", "Bar"]} />
          </PanelBody>
          <PanelTitle><span /><PanelName>Viewport Tools <Caret /></PanelName><span /></PanelTitle>
        </Panel>
        <Panel $w={350}>
          <PanelBody>
            <Big icon="toolPalettes" w={42} lines={["Tool", "Palettes"]} />
            <Big icon="properties" w={58} lines={["Properties"]} />
            <Big icon="sheetSet" w={52} lines={["Sheet Set", "Manager"]} />
            <SmallIcons w={22} names={[["palA", "Command line"], ["palC", "Layer properties"], ["palD", "Sheet list"]]} />
            <SmallIcons w={22} names={[["palB", "Block editor"], ["calc", "Calculator"], ["toolbox", "Content library"]]} />
            <PanelRule />
            <List w={114} items={[["matBrowser", "Materials Browser"], ["matEditor", "Materials Editor"], ["visStyles", "Visual Styles"]]} />
            <SmallIcons w={22} names={[["extA", "Camera"], ["extB", "Lights"], ["extC", "Sun properties"]]} />
          </PanelBody>
          <PanelTitle><span /><PanelName>Palettes <Caret /></PanelName><span /></PanelTitle>
        </Panel>
        <Panel $w={251}>
          <PanelBody>
            <Big icon="switchWin" w={62} caret lines={["Switch", "Windows"]} />
            <Big icon="fileTabs" w={36} lines={["File", "Tabs"]} />
            <Big icon="layoutTabs" w={39} on lines={["Layout", "Tabs"]} />
            <WindowLayouts>
              <List w={104} items={[["tileH", "Tile Horizontally"], ["tileV", "Tile Vertically"], ["cascade", "Cascade"]]} />
            </WindowLayouts>
          </PanelBody>
          <PanelTitle><span /><PanelName>Interface</PanelName><PlainButton aria-label="Interface options">{icons.launcher}</PlainButton></PanelTitle>
        </Panel>
      </Ribbon>

      <Workspace>
        <Canvas>
          <Model />
          <ViewLabel>[−][Custom View][Realistic]</ViewLabel>
          <Ucs />
          <ViewCube>
            <Cube />
            <UcsMenu>Unnamed <Caret size={8} color="#b9bcc2" /></UcsMenu>
          </ViewCube>
          <NavBar><NavTools /></NavBar>
        </Canvas>
        <ScrollEdge />
      </Workspace>

      <StatusBar>
        <LayoutTabs>
          <LayoutTab $active>Model</LayoutTab>
          <LayoutTab>Layout1</LayoutTab>
          <LayoutTab>Layout2</LayoutTab>
          <LayoutTab aria-label="New layout"><Icon w={8} h={8}><path d="M4 0v8M0 4h8" stroke="#ccc" strokeWidth="1.500" /></Icon></LayoutTab>
        </LayoutTabs>
        <StatusTools>
          <StatusGroup $w={46}><PlainButton>MODEL</PlainButton></StatusGroup>
          <StatusGroup $w={61}>{status.grid}{status.snap}<Caret /></StatusGroup>
          <StatusGroup $w={97}>{status.ortho}{status.polar}<Caret />{status.iso}<Caret /></StatusGroup>
          <StatusGroup $w={61}>{status.track}{status.osnap}<Caret /></StatusGroup>
          <StatusGroup $w={99}>{status.annoA}{status.annoB}{status.annoC}<PlainButton>1:1</PlainButton><Caret /></StatusGroup>
          <StatusGroup $w={37}>{status.gear}<Caret /></StatusGroup>
          <StatusGroup $w={24}>{status.plus}</StatusGroup>
          <StatusGroup $w={25}>{status.isolate}</StatusGroup>
          <StatusGroup $w={24}>{status.hardware}</StatusGroup>
          <StatusGroup $w={47}>{status.full}{status.menu}</StatusGroup>
        </StatusTools>
      </StatusBar>

      <TaskBar>
        <TaskApps>
          <SystemButton aria-label="Start">{task.start}</SystemButton>
          <SystemButton aria-label="Search">{task.search}</SystemButton>
          <TaskButton aria-label="Task view">{task.view}</TaskButton>
          <TaskButton aria-label="Edge">{task.edge}</TaskButton>
          <TaskButton aria-label="File Explorer" $running>{task.explorer}</TaskButton>
          <TaskButton aria-label="Calculator">{task.calculator}</TaskButton>
          <TaskButton aria-label="Chrome" $running>{task.chrome}</TaskButton>
          <TaskButton aria-label="Snipping Tool">{task.snip}</TaskButton>
          <TaskButton aria-label="AutoCAD" $focused><TaskTile><AutocadMark size={20} /></TaskTile></TaskButton>
        </TaskApps>
        <Tray>
          <TrayButton $w={46} aria-label="People">{task.people}</TrayButton>
          <TrayButton $w={22} aria-label="Hidden icons">{task.chevron}</TrayButton>
          <TrayButton $w={24} aria-label="Battery">{task.battery}</TrayButton>
          <TrayButton $w={22} aria-label="Volume">{task.speaker}</TrayButton>
          <TrayButton $w={22} aria-label="Network">{task.wifi}</TrayButton>
          <TrayButton $w={34}>ENG</TrayButton>
          <Clock>6:03 PM<br />01/06/2020</Clock>
          <TrayButton $w={46} aria-label="Notifications">{task.notify}</TrayButton>
          <ShowDesktop />
        </Tray>
      </TaskBar>
    </Shell>
  );
}
